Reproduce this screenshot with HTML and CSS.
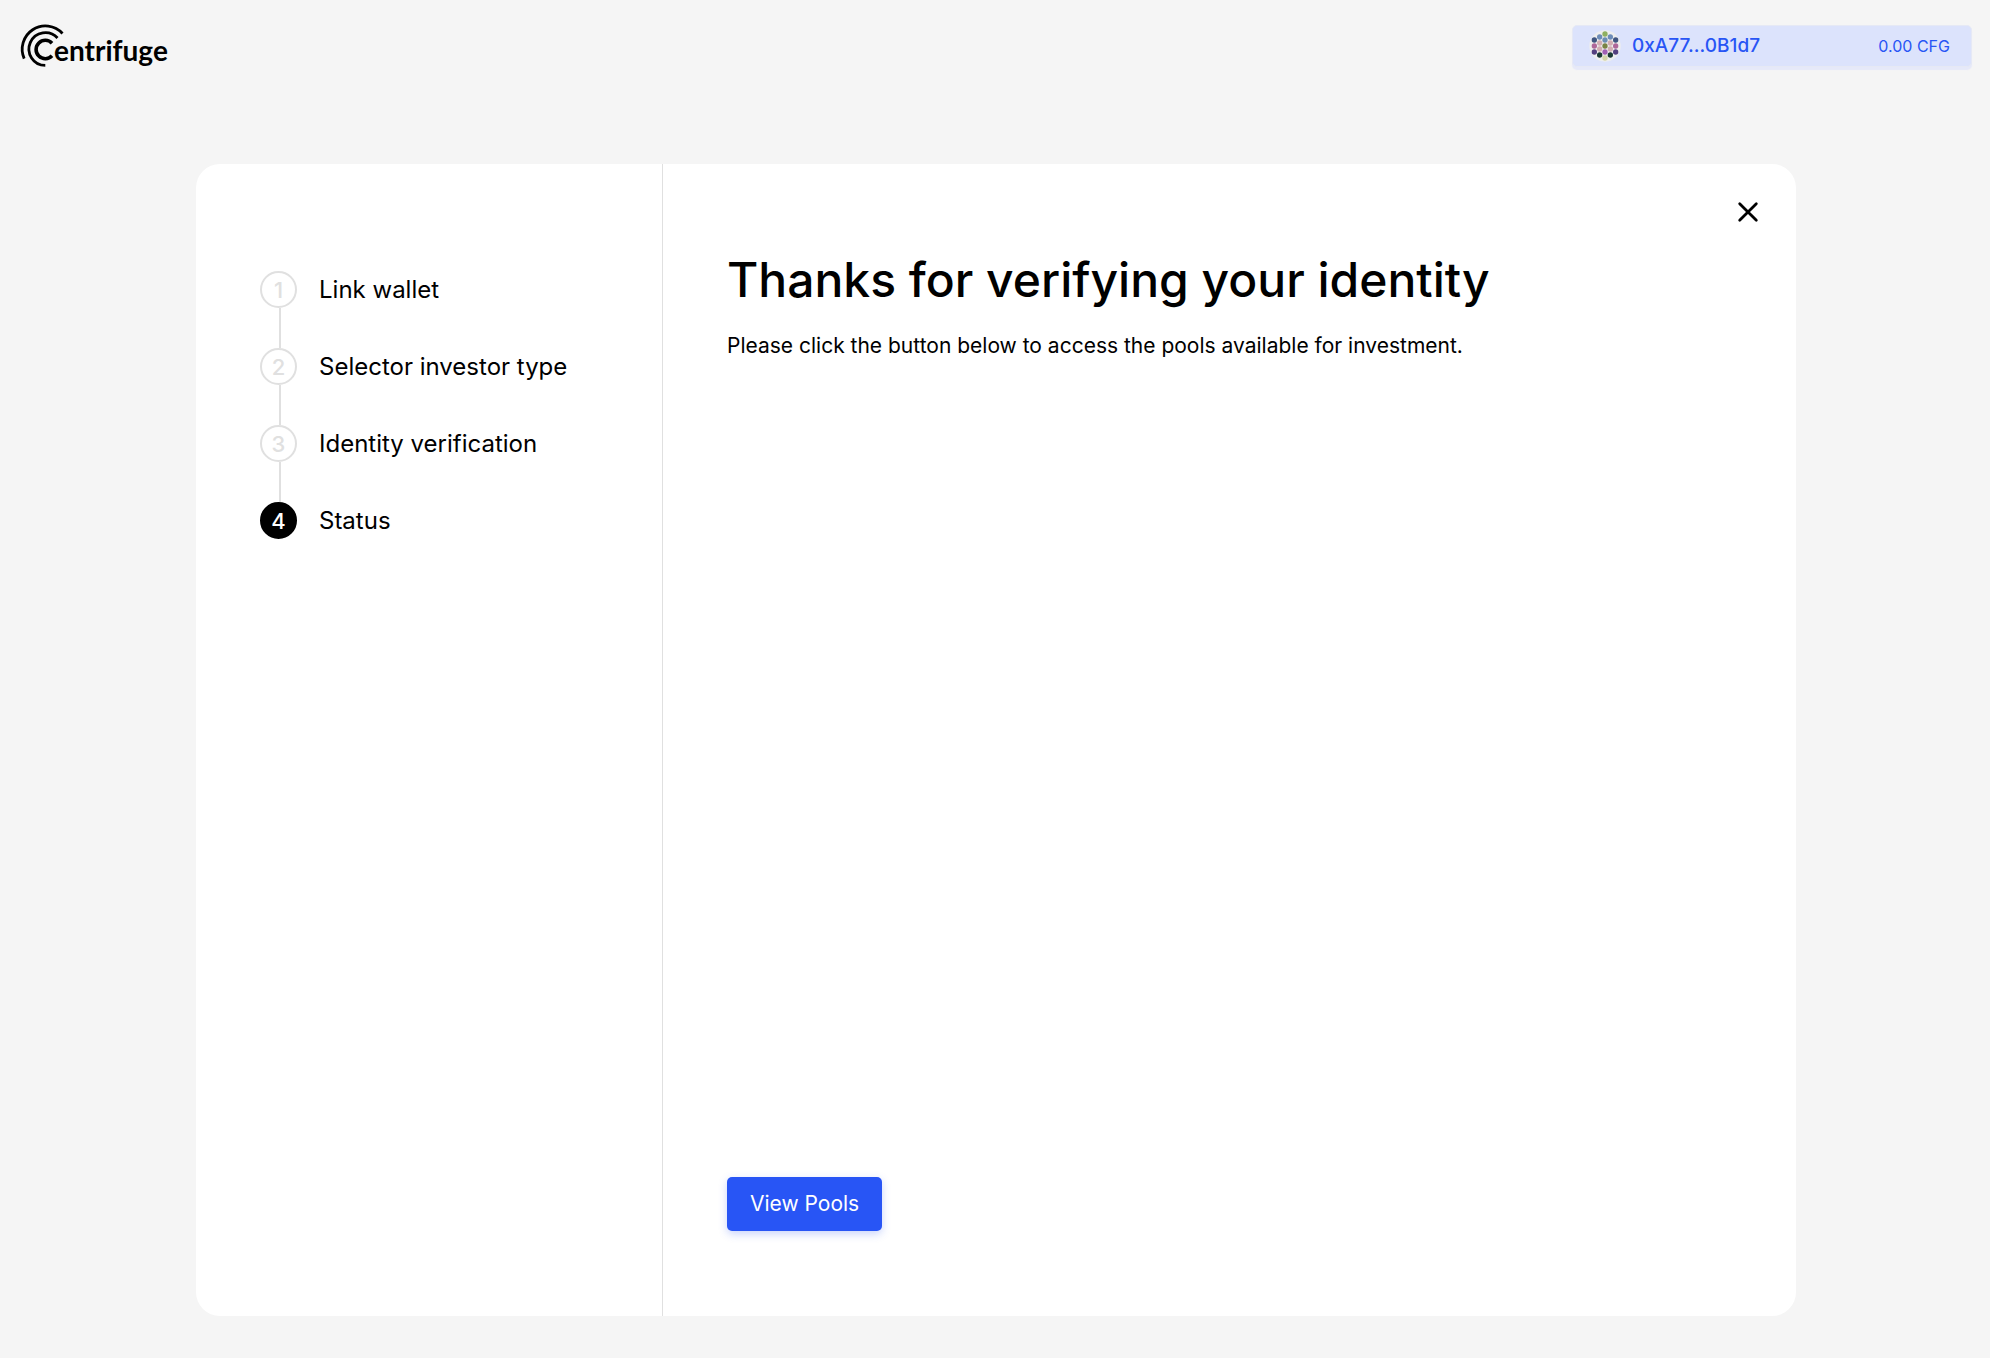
FILE: index.html
```html
<!DOCTYPE html>
<html lang="en">
<head>
<meta charset="utf-8">
<meta name="viewport" content="width=device-width, initial-scale=1">
<title>Centrifuge – Onboarding</title>
<link rel="stylesheet" href="styles.css">
</head>
<body>
<header class="header">
  <a class="logo" href="#" aria-label="Centrifuge">
    <svg class="logo-mark" viewBox="0 0 46 46" fill="none" stroke="#000" aria-hidden="true">
      <path d="M4.200 34.600A23.200 23.200 0 0 1 42.500 9.500" stroke-width="2.800"/>
      <path d="M25.300 41.400A16.400 16.400 0 1 1 37.500 14" stroke-width="2.800"/>
      <path d="M32 31.800A9.200 9.200 0 1 1 32 19.200" stroke-width="3.600"/>
    </svg>
    <span class="logo-text">entrifuge</span>
  </a>
  <button class="account" type="button">
    <svg class="identicon" viewBox="0 0 96 96" aria-hidden="true">
      <circle cx="48" cy="48" r="47" fill="#eee"/>
      <circle cx="48" cy="12" r="8" fill="#8fb061"/>
      <circle cx="48" cy="30" r="8" fill="#6d8fb5"/>
      <circle cx="48" cy="48" r="8" fill="#7a8345"/>
      <circle cx="48" cy="66" r="8" fill="#a05fb4"/>
      <circle cx="48" cy="84" r="8" fill="#d3d6a9"/>
      <g fill="#6d8cb8"><circle cx="32" cy="21" r="8"/><circle cx="64" cy="21" r="8"/></g>
      <g fill="#d1adb2"><circle cx="32" cy="39" r="8"/><circle cx="64" cy="39" r="8"/><circle cx="32" cy="57" r="8"/><circle cx="64" cy="57" r="8"/></g>
      <g fill="#1b3a33"><circle cx="32" cy="75" r="8"/><circle cx="64" cy="75" r="8"/></g>
      <g fill="#3f5580"><circle cx="16" cy="30" r="8"/><circle cx="80" cy="30" r="8"/></g>
      <g fill="#ae6799"><circle cx="16" cy="48" r="8"/><circle cx="80" cy="48" r="8"/></g>
      <g fill="#54407f"><circle cx="16" cy="66" r="8"/><circle cx="80" cy="66" r="8"/></g>
    </svg>
    <span class="address">0xA77...0B1d7</span>
    <span class="balance">0.00 CFG</span>
  </button>
</header>
<main class="card">
  <nav class="sidebar" aria-label="Onboarding steps">
    <ol class="steps">
      <li class="step"><span class="step-number">1</span><span class="step-label">Link wallet</span></li>
      <li class="step"><span class="step-number">2</span><span class="step-label">Selector investor type</span></li>
      <li class="step"><span class="step-number">3</span><span class="step-label">Identity verification</span></li>
      <li class="step active" aria-current="step"><span class="step-number">4</span><span class="step-label">Status</span></li>
    </ol>
  </nav>
  <section class="content">
    <button class="close" type="button" aria-label="Close">
      <svg class="close-icon" viewBox="0 0 32 32" fill="none" stroke="#000" stroke-width="2.800" stroke-linecap="round" aria-hidden="true"><path d="M7.700 7.700L24.300 24.300M24.300 7.700L7.700 24.300"/></svg>
    </button>
    <h1 class="title">Thanks for verifying your identity</h1>
    <p class="text">Please click the button below to access the pools available for investment.</p>
    <button class="primary" type="button">View Pools</button>
  </section>
</main>
</body>
</html>
```
FILE: styles.css
```css
* {
  box-sizing: border-box;
}

body {
  margin: 0;
  min-height: 100vh;
  padding: 24px 18px 42px 20px;
  display: flex;
  flex-direction: column;
  gap: 94px;
  background: #f5f5f5;
  color: #000;
  font-family: Inter, "Liberation Sans", sans-serif;
}

button {
  font-family: inherit;
  border: 0;
  cursor: pointer;
}

.header {
  display: flex;
  justify-content: space-between;
  align-items: flex-start;
}

.logo {
  display: flex;
  align-items: flex-start;
  color: #000;
  text-decoration: none;
}

.logo-mark {
  width: 46px;
  height: 46px;
  overflow: visible;
}

.logo-text {
  margin-left: -12px;
  padding-top: 9px;
  font: 700 28px/34px Lato, sans-serif;
}

.account {
  width: 400px;
  height: 42px;
  margin-top: 1px;
  padding: 0 21px 0 16px;
  display: flex;
  align-items: center;
  background: #dce3fc;
  border: 1px solid #e6e9f5;
  border-radius: 5px;
  box-shadow: 0 3px 1px #e6e9f9;
  color: #2855f5;
}

.identicon {
  width: 32px;
  height: 32px;
}

.address {
  margin-left: 11px;
  font-size: 19px;
  line-height: 24px;
  font-weight: 500;
}

.balance {
  margin-left: auto;
  font-size: 16px;
  line-height: 24px;
}

.card {
  flex: 1;
  width: 100%;
  max-width: 1600px;
  margin: 0 auto;
  display: grid;
  grid-template-columns: 467px 1fr;
  background: #fff;
  border-radius: 24px;
}

.sidebar {
  padding: 107px 24px 64px 64px;
  border-right: 1px solid #e0e0e0;
}

.steps {
  margin: 0;
  padding: 0;
  display: flex;
  flex-direction: column;
  gap: 40px;
  list-style: none;
}

.step {
  position: relative;
  display: flex;
  align-items: center;
  gap: 22px;
}

.step:not(:last-child)::after {
  content: "";
  position: absolute;
  left: 19px;
  top: 100%;
  width: 2px;
  height: 40px;
  background: #e0e0e0;
}

.step-number {
  width: 37px;
  height: 37px;
  display: grid;
  place-items: center;
  border: 2px solid #e0e0e0;
  border-radius: 50%;
  color: #e0e0e0;
  font-size: 22px;
  line-height: 28px;
  font-weight: 500;
}

.step-label {
  font-size: 24px;
  line-height: 36px;
}

.active .step-number {
  background: #000;
  border-color: #000;
  color: #fff;
}

.content {
  position: relative;
  padding: 86px 64px 85px;
  display: flex;
  flex-direction: column;
  align-items: flex-start;
}

.close {
  position: absolute;
  top: 32px;
  right: 32px;
  padding: 0;
  background: none;
}

.close-icon {
  display: block;
  width: 32px;
  height: 32px;
}

.title {
  margin: 0;
  font-size: 48px;
  line-height: 60px;
  font-weight: 500;
}

.text {
  margin: 20px 0 0;
  font-size: 21px;
  line-height: 32px;
}

.primary {
  margin-top: auto;
  height: 54px;
  padding: 0 23px;
  background: #2855f5;
  border-radius: 5px;
  box-shadow: 0 3px 8px #2855f540;
  color: #fff;
  font-size: 21px;
  line-height: 28px;
}
```
